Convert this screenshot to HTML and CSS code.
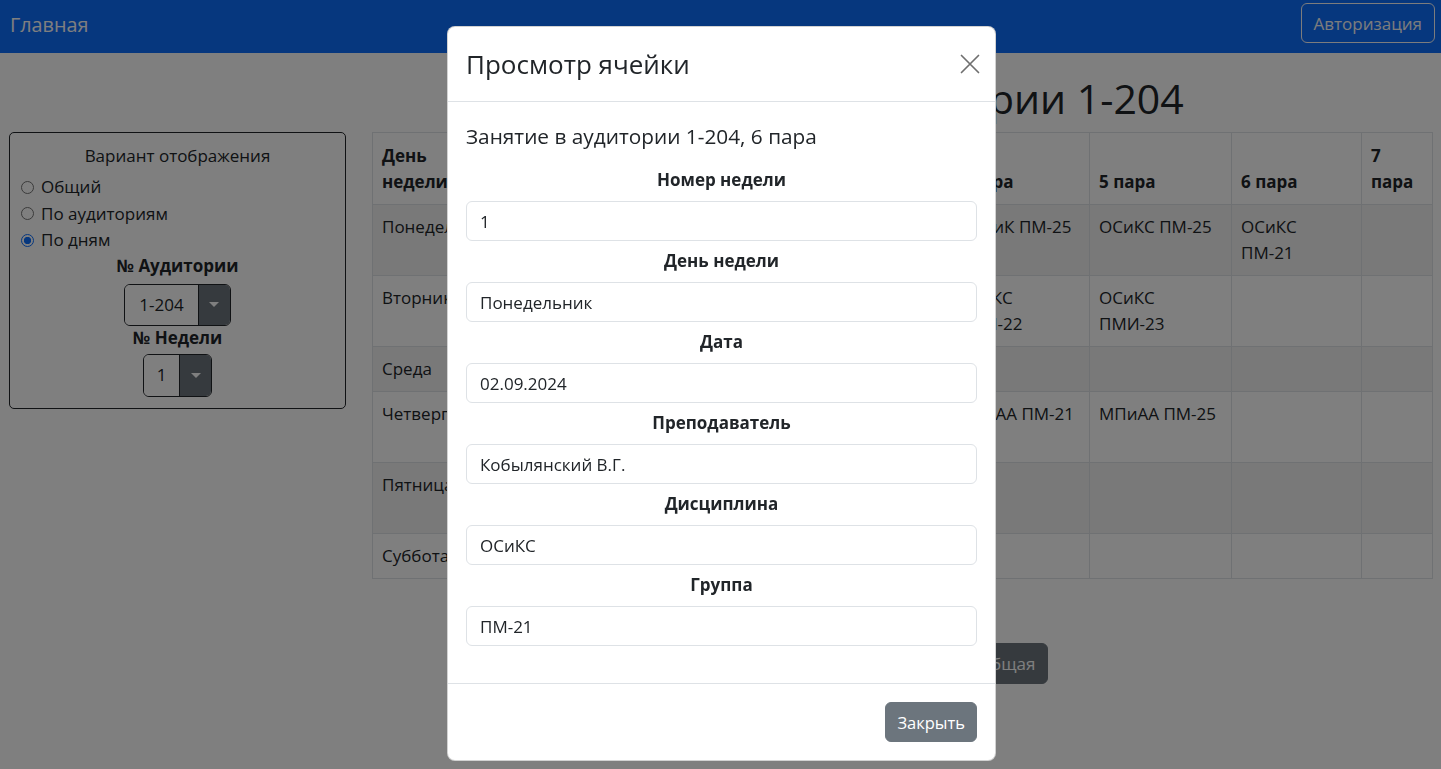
FILE: index.html
```html
<!DOCTYPE html>
<html lang="ru">
<head>
<meta charset="utf-8">
<title>Расписание аудитории 1-204</title>
<link rel="stylesheet" href="styles.css">
</head>
<body>
<nav class="navbar">
  <a class="brand" href="#">Главная</a>
  <button class="btn-auth" type="button">Авторизация</button>
</nav>

<main class="page">
  <h1 class="page-title">Расписание аудитории 1-204</h1>

  <aside class="panel">
    <div class="panel-title">Вариант отображения</div>
    <label class="radio-row"><input type="radio" name="mode"> Общий</label>
    <label class="radio-row"><input type="radio" name="mode"> По аудиториям</label>
    <label class="radio-row"><input type="radio" name="mode" checked> По дням</label>
    <div class="panel-label">№ Аудитории</div>
    <div class="picker"><span class="picker-value">1-204</span><span class="picker-toggle"><span class="caret"></span></span></div>
    <div class="panel-label">№ Недели</div>
    <div class="picker picker-week"><span class="picker-value">1</span><span class="picker-toggle"><span class="caret"></span></span></div>
  </aside>

  <section class="schedule">
    <table class="table">
      <colgroup>
        <col class="c-day"><col class="c-wide"><col class="c-wide"><col class="c-wide">
        <col class="c-mid"><col class="c-mid"><col class="c-six"><col class="c-seven">
      </colgroup>
      <thead>
        <tr><th>День недели</th><th>1 пара</th><th>2 пара</th><th>3 пара</th><th>4 пара</th><th>5 пара</th><th>6 пара</th><th>7 пара</th></tr>
      </thead>
      <tbody>
        <tr><td>Понедельник</td><td></td><td>МПиАА ПМ-21</td><td>ОСиКС ПМИ-22 ПМИ-23</td><td>ПОСиК ПМ-25</td><td>ОСиКС ПМ-25</td><td>ОСиКС ПМ-21</td><td></td></tr>
        <tr><td>Вторник</td><td></td><td></td><td>ОСиКС ПМ-21</td><td>ОСиКС ПМИ-22</td><td>ОСиКС ПМИ-23</td><td></td><td></td></tr>
        <tr><td>Среда</td><td></td><td></td><td></td><td></td><td></td><td></td><td></td></tr>
        <tr><td>Четверг</td><td></td><td>ОСиКС ПМИ-22 ПМИ-23</td><td>МПиАА ПМ-25</td><td>МПиАА ПМ-21</td><td>МПиАА ПМ-25</td><td></td><td></td></tr>
        <tr><td>Пятница</td><td></td><td>ОСиКС ПМИ-23 ПМИ-22</td><td>МПиАА ПМ-21</td><td></td><td></td><td></td><td></td></tr>
        <tr><td>Суббота</td><td></td><td></td><td></td><td></td><td></td><td></td><td></td></tr>
      </tbody>
    </table>
    <div class="actions">
      <button class="btn btn-dark" type="button">Подробная версия</button>
      <button class="btn btn-dark" type="button">Общая</button>
    </div>
  </section>
</main>

<div class="backdrop"></div>

<div class="modal" role="dialog" aria-modal="true">
  <div class="modal-content">
    <div class="modal-header">
      <h3 class="modal-title">Просмотр ячейки</h3>
      <button class="btn-close" type="button" aria-label="Закрыть">
        <svg viewBox="0 0 20 20" width="20" height="20"><path d="M1.5 1.5 L18.5 18.5 M18.5 1.5 L1.5 18.5" stroke="currentColor" stroke-width="1.7" fill="none" stroke-linecap="round"/></svg>
      </button>
    </div>
    <div class="modal-body">
      <p class="lesson">Занятие в аудитории 1-204, 6 пара</p>
      <div class="field"><label class="field-label">Номер недели</label><input class="form-control" type="text" value="1" readonly></div>
      <div class="field"><label class="field-label">День недели</label><input class="form-control" type="text" value="Понедельник" readonly></div>
      <div class="field"><label class="field-label">Дата</label><input class="form-control" type="text" value="02.09.2024" readonly></div>
      <div class="field"><label class="field-label">Преподаватель</label><input class="form-control" type="text" value="Кобылянский В.Г." readonly></div>
      <div class="field"><label class="field-label">Дисциплина</label><input class="form-control" type="text" value="ОСиКС" readonly></div>
      <div class="field"><label class="field-label">Группа</label><input class="form-control" type="text" value="ПМ-21" readonly></div>
    </div>
    <div class="modal-footer">
      <button class="btn btn-secondary" type="button">Закрыть</button>
    </div>
  </div>
</div>
</body>
</html>
```

FILE: styles.css
```css
* { box-sizing: border-box; }

html, body {
  margin: 0;
  padding: 0;
}

body {
  font-family: "Open Sans", "Noto Sans", "Liberation Sans", sans-serif;
  font-size: 17px;
  line-height: 26px;
  color: #212529;
  background: #fff;
  overflow: hidden;
}

button, input {
  font-family: inherit;
}

/* navbar */
.navbar {
  height: 53px;
  background: #0d6efd;
  display: flex;
  align-items: center;
  justify-content: space-between;
  padding: 0 6px 0 10px;
}

.brand {
  color: #fff;
  text-decoration: none;
  font-size: 19.8px;
  line-height: 30px;
  margin-bottom: 3px;
}

.btn-auth {
  height: 40px;
  padding: 0 12px;
  margin-bottom: 7px;
  background: transparent;
  border: 1px solid #f8f9fa;
  border-radius: 6px;
  color: #f8f9fa;
  font-size: 17px;
}

/* page */
.page {
  display: grid;
  grid-template-columns: 337px 1fr;
  column-gap: 26px;
  padding: 0 9px;
  align-items: start;
}

.page-title {
  grid-column: 2;
  grid-row: 1;
  margin: 21px 0 10px;
  padding-right: 16px;
  font-size: 41px;
  line-height: 48px;
  font-weight: 500;
  text-align: center;
}

.panel {
  grid-column: 1;
  grid-row: 2;
  border: 1px solid #212529;
  border-radius: 5px;
  padding: 10px 11px 11px;
  text-align: center;
}

.panel-title {
  font-weight: 500;
  line-height: 26px;
  margin-bottom: 5px;
}

.radio-row {
  display: flex;
  align-items: center;
  gap: 7px;
  line-height: 26.5px;
  text-align: left;
}

.radio-row input {
  appearance: none;
  -webkit-appearance: none;
  margin: 0;
  width: 13px;
  height: 13px;
  border-radius: 50%;
  border: 1px solid #767676;
  background: #fff;
  flex: none;
}

.radio-row input:checked {
  border-color: #0d6efd;
  background: radial-gradient(circle, #0d6efd 0 3.4px, #fff 3.9px);
}

.panel-label {
  font-weight: 700;
  line-height: 26px;
  margin-top: -1px;
}

.picker {
  display: inline-flex;
  height: 42px;
  margin-top: 5px;
  border: 1px solid #212529;
  border-radius: 6px;
  overflow: hidden;
  vertical-align: top;
}

.picker-week {
  margin-top: 3px;
  height: 43px;
}

.picker-value {
  display: flex;
  align-items: center;
  padding: 0 14px;
  background: #fff;
}

.picker-week .picker-value {
  padding: 0 13px;
}

.picker-toggle {
  width: 32px;
  display: flex;
  align-items: center;
  justify-content: center;
  background: #6c757d;
  border-left: 1px solid #212529;
}

.caret {
  width: 0;
  height: 0;
  border-left: 5px solid transparent;
  border-right: 5px solid transparent;
  border-top: 5px solid #fff;
}

/* table */
.schedule {
  grid-column: 2;
  grid-row: 2;
}

.table {
  width: 100%;
  border-collapse: collapse;
  table-layout: fixed;
}

.c-day { width: 125px; }
.c-wide { width: 150px; }
.c-mid { width: 142px; }
.c-six { width: 130px; }
.c-seven { width: 71px; }

.table th,
.table td {
  border: 1px solid #dee2e6;
  padding: 9px 9px;
  text-align: left;
  vertical-align: top;
  line-height: 26px;
}

.table th {
  vertical-align: bottom;
  font-weight: 700;
  padding-top: 10px;
}

.table tbody tr:nth-child(odd) td {
  background: rgba(0, 0, 0, 0.05);
}

.actions {
  display: flex;
  justify-content: center;
  gap: 8px;
  margin-top: 64px;
  padding-left: 19px;
}

.btn {
  height: 41px;
  padding: 0 12px;
  border: 1px solid transparent;
  border-radius: 6px;
  font-size: 17px;
  color: #fff;
}

.btn-dark {
  background: #6c757d;
  border-color: #6c757d;
}

.btn-secondary {
  height: 40px;
  padding: 0 11px;
  background: #6c757d;
  border-color: #6c757d;
  font-size: 16.5px;
}

/* overlay */
.backdrop {
  position: fixed;
  inset: 0;
  background: rgba(0, 0, 0, 0.5);
}

.modal {
  position: fixed;
  inset: 0;
  display: flex;
  justify-content: center;
  align-items: flex-start;
  padding: 26px 0 0 2px;
}

.modal-content {
  width: 549px;
  background: #fff;
  border: 1px solid rgba(0, 0, 0, 0.175);
  border-radius: 8px;
}

.modal-header {
  display: flex;
  align-items: center;
  justify-content: space-between;
  padding: 17px 18px;
  border-bottom: 1px solid #dee2e6;
}

.modal-title {
  margin: 0;
  font-size: 26px;
  line-height: 40px;
  font-weight: 500;
}

.btn-close {
  width: 20px;
  height: 20px;
  padding: 0;
  margin-right: -3px;
  border: 0;
  background: transparent;
  color: #6f6f6f;
  display: flex;
}

.modal-body {
  padding: 19px 18px 37px;
}

.lesson {
  margin: 0 0 16px;
  font-size: 20.8px;
  line-height: 30px;
}

.field + .field {
  margin-top: 7px;
}

.field-label {
  display: block;
  text-align: center;
  font-weight: 700;
  line-height: 26px;
  margin-bottom: 8px;
}

.form-control {
  display: block;
  width: 100%;
  height: 40px;
  padding: 0 13px;
  border: 1px solid #dee2e6;
  border-radius: 6px;
  font-size: 17px;
  color: #212529;
  background: #fff;
  outline: none;
}

.modal-footer {
  display: flex;
  justify-content: flex-end;
  padding: 18px;
  border-top: 1px solid #dee2e6;
}
```
